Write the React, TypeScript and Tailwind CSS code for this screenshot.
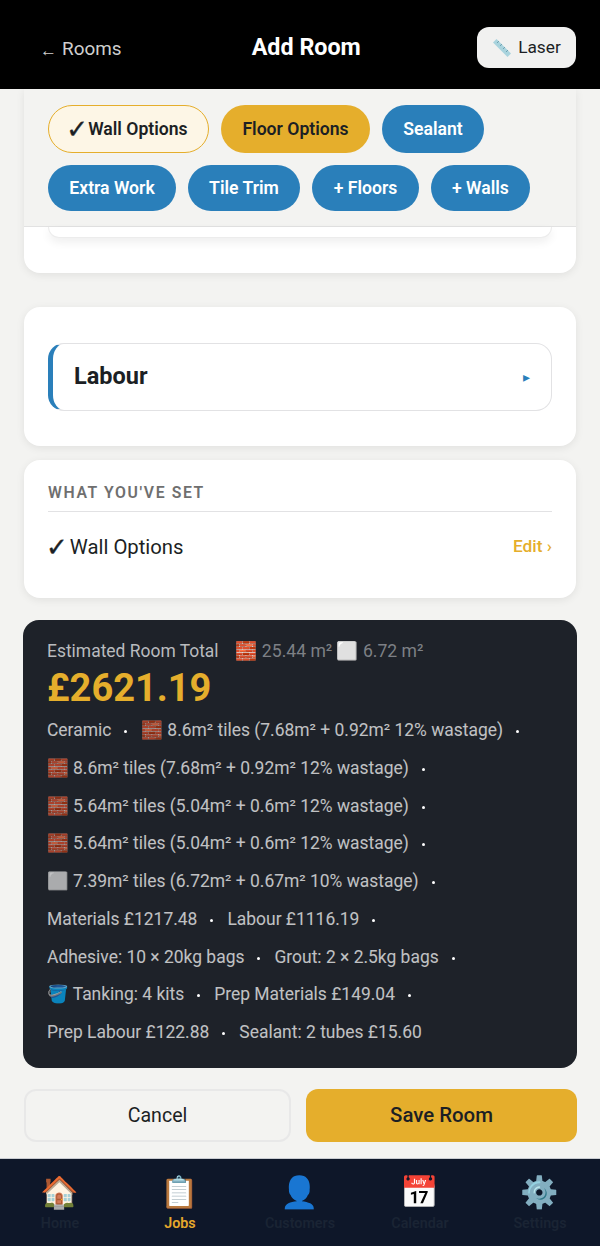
const font = { fontFamily: 'Roboto, "Noto Color Emoji", sans-serif' }

const chipBlue =
  'flex items-center justify-center rounded-full bg-[#2a7fba] text-[17.6px] font-semibold text-white'

const checkMark = 'font-["DejaVu_Sans"] text-[26px] leading-none [-webkit-text-stroke:0.4px_#1c1f24]'

const breakdown = [
  'Ceramic',
  '🧱 8.6m² tiles (7.68m² + 0.92m² 12% wastage)',
  '🧱 8.6m² tiles (7.68m² + 0.92m² 12% wastage)',
  '🧱 5.64m² tiles (5.04m² + 0.6m² 12% wastage)',
  '🧱 5.64m² tiles (5.04m² + 0.6m² 12% wastage)',
  '⬜ 7.39m² tiles (6.72m² + 0.67m² 10% wastage)',
  'Materials £1217.48',
  'Labour £1116.19',
  'Adhesive: 10 × 20kg bags',
  'Grout: 2 × 2.5kg bags',
  '🪣 Tanking: 4 kits',
  'Prep Materials £149.04',
  'Prep Labour £122.88',
  'Sealant: 2 tubes £15.60',
]

const navItems = [
  { icon: '🏠', label: 'Home' },
  { icon: '📋', label: 'Jobs', active: true },
  { icon: '👤', label: 'Customers' },
  { icon: '📅', label: 'Calendar' },
  { icon: '⚙️', label: 'Settings' },
]

function RulerIcon() {
  return (
    <svg width="20" height="20" viewBox="0 0 20 20">
      <path d="M4.5 1 L19 15.5 L15.5 19 L1 4.5 Z" fill="#a9d3dd" />
      <path d="M5 5 L7 3 M8 8 L10 6 M11 11 L13 9 M14 14 L16 12" stroke="#6fa3b3" strokeWidth="1" />
    </svg>
  )
}

export default function App() {
  return (
    <div style={font} className="flex h-[1246px] w-[600px] flex-col overflow-hidden bg-[#f3f3f1] text-[#1c1f24]">
      <header className="flex h-[89px] shrink-0 items-center justify-between bg-black pl-10 pr-6 pt-[6px] text-white">
        <span className="flex items-center gap-[5px] pt-[3px] text-[18.9px] font-normal text-[#cfcfcf]">
          <span className="pt-[3px] text-[17px]">←</span> Rooms
        </span>
        <span className="ml-[14px] text-[23.3px] font-bold">Add Room</span>
        <button className="flex h-[41px] w-[99px] items-center justify-center gap-[6px] rounded-xl bg-[#f1f1f0] text-[17.3px] font-normal text-[#1c1f24]">
          <RulerIcon /> Laser
        </button>
      </header>

      <main className="flex flex-1 flex-col px-6">
        <section className="h-[184px] shrink-0 overflow-hidden rounded-b-2xl bg-white shadow-[0_2px_8px_rgba(0,0,0,0.08)]">
          <div className="h-[138px] border-b border-[#e2e2e2] bg-[#f3f3f1] px-6 pt-[16px]">
            <div className="flex gap-3">
              <div className="flex h-[48px] w-[161px] items-center justify-center rounded-full border border-[#e5ae2c] bg-[#fdf6e6] pr-[3px] text-[17.6px] font-semibold">
                <span className={checkMark}>✓</span> Wall Options
              </div>
              <div className="flex h-[48px] w-[149px] items-center justify-center rounded-full bg-[#e5ae2c] text-[17.6px] font-semibold">
                Floor Options
              </div>
              <div className={`${chipBlue} h-[48px] w-[102px]`}>Sealant</div>
            </div>
            <div className="mt-3 flex gap-3">
              <div className={`${chipBlue} h-[46px] w-[128px]`}>Extra Work</div>
              <div className={`${chipBlue} h-[46px] w-[112px]`}>Tile Trim</div>
              <div className={`${chipBlue} h-[46px] w-[107px]`}>+ Floors</div>
              <div className={`${chipBlue} h-[46px] w-[99px]`}>+ Walls</div>
            </div>
          </div>
          <div className="mx-6 h-[11px] rounded-b-2xl border border-t-0 border-[#ececec] bg-white shadow-[0_4px_10px_rgba(0,0,0,0.07)]" />
        </section>

        <section className="mt-[34px] h-[139px] rounded-2xl bg-white px-6 pt-9 shadow-[0_2px_8px_rgba(0,0,0,0.08)]">
          <div className="flex h-[68px] items-center justify-between rounded-2xl border border-l-[5px] border-[#e2e2e4] border-l-[#2a7fba] px-[21px]">
            <span className="text-[23.5px] font-bold">Labour</span>
            <span className="text-[14px] text-[#2a7fba]">▸</span>
          </div>
        </section>

        <section className="mt-[14px] h-[138px] rounded-2xl bg-white px-6 pt-[24px] shadow-[0_2px_8px_rgba(0,0,0,0.08)]">
          <div className="border-b border-[#e2e2e4] pb-[9px] text-[15.8px] font-semibold leading-[18px] tracking-[1.6px] text-[#6f6f6f]">
            WHAT YOU'VE SET
          </div>
          <div className="mt-[20px] flex items-center justify-between">
            <span className="-ml-[2px] flex items-center gap-[2px] text-[20.3px] font-normal">
              <span className={checkMark}>✓</span> Wall Options
            </span>
            <span className="text-[17.3px] font-medium text-[#e5ae2c]">Edit ›</span>
          </div>
        </section>

        <section className="-mx-px mt-[22px] h-[448px] shrink-0 rounded-2xl bg-[#1e2229] px-6 pt-[19px]">
          <div className="flex items-center gap-[17px] text-[17.45px] leading-[24px] font-normal text-[#b9bbbe]">
            <span>Estimated Room Total</span>
            <span className="text-[17.6px] text-[#7d8085]">🧱 25.44 m² ⬜ 6.72 m²</span>
          </div>
          <div className="mt-[4px] text-[38px] font-bold leading-[42px] text-[#e5ae2c]">£2621.19</div>
          <div className="mt-[10px] flex flex-wrap gap-x-[14px] gap-y-[15.75px]">
            {breakdown.map((item, i) => (
              <span key={i} className="flex items-center text-[17.45px] leading-[22px] font-normal">
                <span className="text-white opacity-[0.72]">{item}</span>
                {i < breakdown.length - 1 && (
                  <span className="ml-[13px] mt-[3px] h-[3px] w-[3px] rounded-full bg-white" />
                )}
              </span>
            ))}
          </div>
        </section>

        <div className="mt-[21px] flex gap-[15px]">
          <button className="h-[53px] w-[267px] shrink-0 rounded-xl border-2 border-[#e8e8e8] text-[19.6px] font-normal">Cancel</button>
          <button className="h-[53px] w-[271px] shrink-0 rounded-xl bg-[#e5ae2c] text-[20.4px] font-medium">Save Room</button>
        </div>
      </main>

      <nav className="grid h-[88px] shrink-0 grid-cols-5 border-t border-[#c9ccd2] bg-[#0e1729] pt-[14px]">
        {navItems.map((item) => (
          <div key={item.label} className="flex flex-col items-center">
            <span className="text-[31px] leading-[40px]">{item.icon}</span>
            <span className={`text-[14.3px] font-semibold ${item.active ? 'text-[#e5a82c]' : 'text-[#1a2434]'}`}>
              {item.label}
            </span>
          </div>
        ))}
      </nav>
    </div>
  )
}
